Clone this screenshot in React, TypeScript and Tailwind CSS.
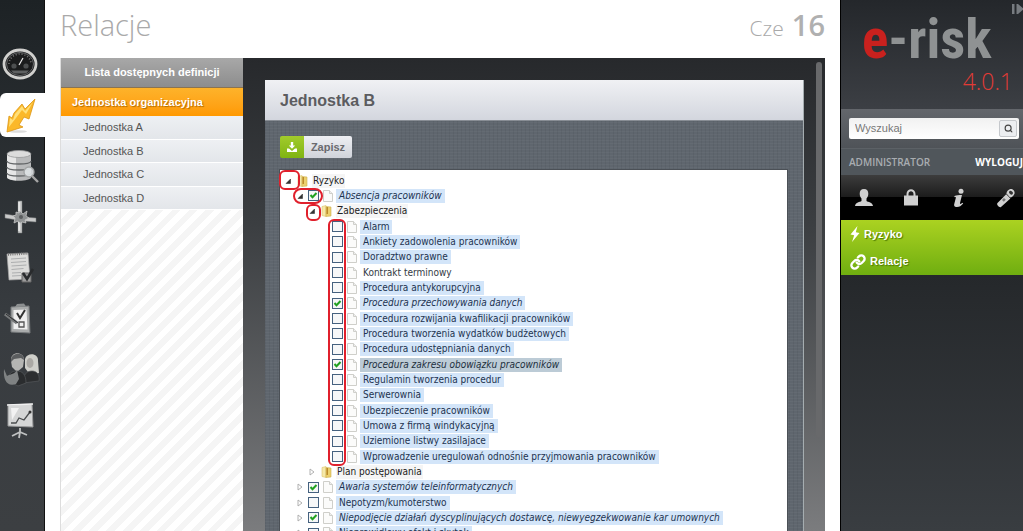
import React from "react";
import { Link, Search } from "lucide-react";

type Tone = "plain" | "marked" | "current" | "folder";

interface Row {
  label: string;
  level: 0 | 1 | 2 | 3;
  kind: "folder" | "file";
  toggle?: "open" | "closed";
  checked?: boolean;
  tone?: Tone;
}

const rows: Row[] = [
  { label: "Ryzyko", level: 0, kind: "folder", toggle: "open" },
  { label: "Absencja pracowników", level: 1, kind: "file", toggle: "open", checked: true },
  { label: "Zabezpieczenia", level: 2, kind: "folder", toggle: "open" },
  { label: "Alarm", level: 3, kind: "file" },
  { label: "Ankiety zadowolenia pracowników", level: 3, kind: "file" },
  { label: "Doradztwo prawne", level: 3, kind: "file" },
  { label: "Kontrakt terminowy", level: 3, kind: "file", tone: "plain" },
  { label: "Procedura antykorupcyjna", level: 3, kind: "file" },
  { label: "Procedura przechowywania danych", level: 3, kind: "file", checked: true },
  { label: "Procedura rozwijania kwafilikacji pracowników", level: 3, kind: "file" },
  { label: "Procedura tworzenia wydatków budżetowych", level: 3, kind: "file" },
  { label: "Procedura udostępniania danych", level: 3, kind: "file" },
  { label: "Procedura zakresu obowiązku pracowników", level: 3, kind: "file", checked: true, tone: "current" },
  { label: "Regulamin tworzenia procedur", level: 3, kind: "file" },
  { label: "Serwerownia", level: 3, kind: "file" },
  { label: "Ubezpieczenie pracowników", level: 3, kind: "file" },
  { label: "Umowa z firmą windykacyjną", level: 3, kind: "file" },
  { label: "Uziemione listwy zasilajace", level: 3, kind: "file" },
  { label: "Wprowadzenie uregulowań odnośnie przyjmowania pracowników", level: 3, kind: "file" },
  { label: "Plan postępowania", level: 2, kind: "folder", toggle: "closed" },
  { label: "Awaria systemów teleinformatycznych", level: 1, kind: "file", toggle: "closed", checked: true },
  { label: "Nepotyzm/kumoterstwo", level: 1, kind: "file", toggle: "closed" },
  { label: "Niepodjęcie działań dyscyplinujących dostawcę, niewyegzekwowanie kar umownych", level: 1, kind: "file", toggle: "closed", checked: true },
  { label: "Nieprawidłowy efekt i skutek", level: 1, kind: "file", toggle: "closed" },
];

const indent = ["pl-[2px]", "pl-[14px]", "pl-[26px]", "pl-[38px]"];

const tones: Record<Tone, string> = {
  plain: "text-[#333a44]",
  marked: "bg-[#d3e5f9] text-[#1d3350]",
  current: "bg-[#bccbd6] text-[#1d2f3d]",
  folder: "bg-[#f5f5f5] text-[#222]",
};

function Toggle({ state, label }: { state?: "open" | "closed"; label: string }) {
  if (!state) return <span className="w-3 shrink-0" />;
  return (
    <button type="button" aria-label={label} className="flex w-3 shrink-0 justify-center">
      <svg viewBox="0 0 8 8" className="size-2">
        {state === "open" ? (
          <path d="M6.500 2v4.500H2z" fill="#333" stroke="#222" strokeWidth=".5" />
        ) : (
          <path d="M2 1l4 3-4 3z" fill="#fff" stroke="#a9a9a9" strokeWidth=".9" />
        )}
      </svg>
    </button>
  );
}

function FolderIcon() {
  return (
    <svg viewBox="0 0 14 14" className="mx-0.5 size-3.5 shrink-0">
      <path d="M2 2.500l4-1v11l-4-1z" fill="#f6e9a8" stroke="#dcc46c" strokeWidth=".6" />
      <path d="M6 2.500l5 .5v9l-5 .5z" fill="#ecd06c" stroke="#cfb052" strokeWidth=".6" />
      <path d="M6.500 3h1.500v7H6.500z" fill="#b98a2c" />
    </svg>
  );
}

function FileIcon() {
  return (
    <svg viewBox="0 0 12 14" className="ml-[3px] h-3.5 w-3 shrink-0">
      <path d="M1.500 1.500h6l3 3v8h-9z" fill="#fbfbfa" stroke="#cfcfca" />
      <path d="M7.500 1.500v3h3" fill="#eee" stroke="#cfcfca" />
    </svg>
  );
}

function TreeRow({ row, index }: { row: Row; index: number }) {
  const id = "node-" + index;
  const tone = row.tone ?? (row.kind === "folder" ? "folder" : "marked");
  const text = tones[tone] + (row.checked ? " italic" : "");
  return (
    <li role="treeitem" aria-level={row.level + 1} className={"flex items-center " + indent[row.level]}>
      <Toggle state={row.toggle} label={"Rozwiń: " + row.label} />
      {row.kind === "file" ? (
        <>
          <span className="relative ml-0.5 flex size-[11px] shrink-0">
            <input
              id={id}
              type="checkbox"
              defaultChecked={row.checked}
              className="peer size-[11px] appearance-none border border-[#45617f] bg-[#f6f7f8]"
            />
            <svg viewBox="0 0 11 11" className="pointer-events-none absolute inset-0 hidden peer-checked:block">
              <path d="M2.500 5l2 2.200L8.500 3" fill="none" stroke="#21a121" strokeWidth="2" />
            </svg>
          </span>
          <FileIcon />
          <label htmlFor={id} className={"ml-0.5 px-[3px] leading-[14px] whitespace-nowrap " + text}>
            {row.label}
          </label>
        </>
      ) : (
        <>
          <FolderIcon />
          <span className={"px-px leading-[14px] whitespace-nowrap " + text}>{row.label}</span>
        </>
      )}
    </li>
  );
}

const navItems: { name: string; art: React.ReactNode }[] = [
  {
    name: "Pulpit",
    art: (
      <>
        <ellipse cx="19" cy="20" rx="16" ry="14" fill="#1b1c1d" stroke="#d0d0ce" strokeWidth="2.800" />
        <ellipse cx="19" cy="20" rx="13.500" ry="11.500" fill="none" stroke="#66686a" strokeWidth="1" />
        <path d="M8 20a11 10 0 0 1 22 0" fill="none" stroke="#777" strokeWidth="1.600" strokeDasharray="1 2" />
        <circle cx="13" cy="22" r="2.600" fill="#4d4f50" />
        <circle cx="25" cy="22" r="2.600" fill="#4d4f50" />
        <path d="M10 26.500h18l-3 3H13z" fill="#5e6061" />
        <path d="M18 21l4-7" stroke="#eee" strokeWidth="1.200" />
      </>
    ),
  },
  {
    name: "Ryzyko",
    art: (
      <>
        <ellipse cx="17" cy="36.500" rx="9" ry="1.300" fill="#ddd" />
        <path d="M34 4L24 14l-3-5-8 9-2 5-3-2-2 16 16-5-4-2 5-8 5 2z" fill="#fbb829" stroke="#dc9614" strokeWidth=".8" />
        <path d="M32 7l-8 9-3-5-7 8-2 6-3-2-1 9 7-9 6-8 4 4z" fill="#ffe07a" />
      </>
    ),
  },
  {
    name: "Rejestr",
    art: (
      <>
        <path d="M6 8v23c0 5 24 5 24 0V8z" fill="#b9babb" />
        <path d="M6 8v23c0 2 4 3 9 3.600V8z" fill="#e6e6e6" />
        <path d="M6 15c0 4 24 4 24 0M6 21c0 4 24 4 24 0M6 27c0 4 24 4 24 0" fill="none" stroke="#65686a" strokeWidth="1.300" />
        <ellipse cx="18" cy="8" rx="12" ry="3.500" fill="#dcdcdc" stroke="#98999a" strokeWidth=".8" />
        <path d="M31 30l6 6" stroke="#a5a5a5" strokeWidth="2.400" />
        <circle cx="28" cy="26" r="5" fill="#dfe3e5" fillOpacity=".9" stroke="#a2a4a5" strokeWidth="1.300" />
      </>
    ),
  },
  {
    name: "Procesy",
    art: (
      <>
        <path d="M17 4h4v12h-4zM17 24h4v12h-4zM4 17l12 2v4L4 21zM22 20l13 1v4l-13-1z" fill="#c8c9c9" stroke="#77797a" strokeWidth=".5" />
        <path d="M15 15l3 1 1-2 3 3 4-3-1 5 3 2-4 2 1 3-4-1-3 2-1-3-4 2 1-5-2-2 3-1z" fill="#8f9293" stroke="#c4c4c4" strokeWidth=".8" />
        <circle cx="20" cy="20" r="2" fill="#5a5d5f" />
        <path d="M18 5v9M18 25v9" stroke="#fff" />
      </>
    ),
  },
  {
    name: "Zadania",
    art: (
      <>
        <path d="M6 6l21-1 2 26-21 1z" fill="#dcdcda" stroke="#a5a5a5" strokeWidth=".7" />
        <path d="M7 6.500l20-1" stroke="#777" strokeWidth="2.500" strokeDasharray="1 1.200" />
        <path d="M10 11l15-1M10 14.500l15-1M10.500 18l15-1M10.500 21.500l12-1M11 25l9-.5M11 28l9-.5" stroke="#a0a2a3" strokeWidth=".8" />
        <path d="M21 25h9v9h-9z" fill="#9c9c9c" stroke="#666" />
        <path d="M22 25l4 6 6-10" fill="none" stroke="#292b2d" strokeWidth="2.600" />
      </>
    ),
  },
  {
    name: "Audyt",
    art: (
      <>
        <path d="M10 8l18-1 1 27-19-1z" fill="#a9abab" stroke="#75787a" />
        <path d="M12.500 11l13-.5 1 20-14-.5z" fill="#efefef" />
        <path d="M14 8l2-3 7-.5 2 3z" fill="#8c8f90" />
        <path d="M16 14l3 5 5-8" fill="none" stroke="#333" strokeWidth="2" />
        <path d="M18 23h5v5h-5z" fill="none" stroke="#555" strokeWidth="1.300" />
        <path d="M4 15l12 9" stroke="#77797a" strokeWidth="3.400" />
        <path d="M5 15l12 9" stroke="#2c2e30" strokeWidth="1" />
      </>
    ),
  },
  {
    name: "Użytkownicy",
    art: (
      <>
        <path d="M24 9c2-7 14-6 13 2l1 12-4 1-2-3-5 1-3-4z" fill="#cfcfca" />
        <ellipse cx="29" cy="13" rx="3.500" ry="5" fill="#aaa8a4" />
        <path d="M22 33c0-9 4-12 9-12s8 4 7 10z" fill="#2c2e30" stroke="#55585a" strokeWidth=".7" />
        <path d="M10 11c-1-10 13-10 13-1l-1 7-6 5-5-5z" fill="#b5b5b3" />
        <path d="M10 12c-1-10 13-11 13-2l-3-2-7 1z" fill="#5b5d5f" />
        <path d="M7 31c0-8 4-10 9-10s9 3 9 12l-8 3z" fill="#2a2c2e" stroke="#55585a" strokeWidth=".7" />
        <path d="M3 19l3 7c4-2 8-2 10-6l2 9-3 5c-9 3-13-4-12-15z" fill="#7f8283" />
      </>
    ),
  },
  {
    name: "Raporty",
    art: (
      <>
        <path d="M19 27v5M19 31l-8 4M19 31l7 3M19 31l-1 6" stroke="#bfc1c1" strokeWidth="1.800" />
        <path d="M7 4l24-1 1 23-25-1z" fill="#d5d6d6" stroke="#98999a" />
        <path d="M6 4l26-1" stroke="#f0f0f0" strokeWidth="1.500" />
        <path d="M10 7l8 0-7 12z" fill="#f2f2f2" />
        <path d="M10 22h5l3-5 5 2 6-8" fill="none" stroke="#4b4d4f" strokeWidth="1.300" />
        <circle cx="29" cy="11" r="1.500" fill="#333" />
      </>
    ),
  },
];

const units = ["Jednostka A", "Jednostka B", "Jednostka C", "Jednostka D"];

const tools: { name: string; art: React.ReactNode }[] = [
  {
    name: "Profil",
    art: (
      <path d="M10 1c3 0 4.300 2 4.300 4.800 0 2-.8 3.700-1.800 4.700v2.500c1.500 1.200 6 1.200 6.500 5H1c.5-3.800 5-3.800 6.500-5v-2.500c-1-1-1.800-2.700-1.800-4.700C5.700 3 7 1 10 1z" />
    ),
  },
  {
    name: "Blokada",
    art: (
      <path d="M3 7.500H5.500V6c0-6.300 9-6.300 9 0v1.500H17V17.500H3zM7.500 7.500h5V6c0-3.600-5-3.600-5 0z" fillRule="evenodd" />
    ),
  },
  {
    name: "Informacje",
    art: (
      <>
        <circle cx="12" cy="3.200" r="2.500" />
        <path d="M5.500 8c2-.8 4-1 7.500-1l-2 8c-.3 1.400 1 1 2.500-.3l.7.8C12 18 10.500 19 8 19c-2.800 0-3.200-1.500-2.700-3.300L6.800 10c.2-.9-.3-1-1.500-.8z" />
      </>
    ),
  },
  {
    name: "Narzędzia",
    art: (
      <>
        <path d="M10.200 6.200l4.200 4.200L5 19c-1.500 1-5-2.500-3.500-4z" />
        <path d="M10.500 5.500c0-2 2-4.500 4.500-4.500s4 2.500 3.500 4.500-2.500 4-4.500 4z" />
        <ellipse cx="15" cy="4.700" rx="2.200" ry="1.600" fill="#333" transform="rotate(40 15 4.700)" />
        <path d="M8 10l1.800 1.800-2 2L6 12z" fill="#777" />
      </>
    ),
  },
];

export default function App() {
  return (
    <div className="flex h-screen overflow-hidden bg-white font-['Liberation_Sans',sans-serif] text-[11px]">
      <nav
        aria-label="Moduły"
        className="flex w-[45px] shrink-0 flex-col gap-[7px] border-r border-[#111] bg-linear-to-b from-[#1d2225] via-[#383c40] via-60% to-[#3c3f42] pt-[42px]"
      >
        {navItems.map((item, i) => (
          <a
            key={item.name}
            href="#"
            aria-label={item.name}
            className={"flex h-11 items-center pl-px " + (i === 1 ? "-mr-px rounded-l-md bg-white" : "")}
          >
            <svg viewBox="0 0 40 40" className="size-10">
              {item.art}
            </svg>
          </a>
        ))}
      </nav>

      <main className="flex min-w-0 flex-1 flex-col px-[15px]">
        <header className="flex h-[58px] shrink-0 items-start justify-between pt-1 font-['Open_Sans',sans-serif] text-[#a9a9a9]">
          <h1 className="text-[29px] leading-[42px] font-light">Relacje</h1>
          <p className="flex items-baseline gap-2 leading-[42px]">
            <span className="text-[21px] font-light">Cze</span>
            <span className="text-[29px] font-semibold text-[#b0b0b0]">16</span>
          </p>
        </header>

        <div className="flex min-h-0 flex-1">
          <aside className="flex w-[183px] shrink-0 flex-col border-l border-[#ddd] bg-[repeating-linear-gradient(135deg,#fff_0_6px,#f5f5f5_6px_12px)]">
            <h2 className="h-[30px] border-b border-[#8a7350] bg-linear-to-b from-[#a8a8a8] to-[#8d8d8d] text-center text-[11px] leading-[29px] font-bold text-white">
              Lista dostępnych definicji
            </h2>
            <a
              href="#"
              className="block h-7 bg-linear-to-b from-[#fdb32a] to-[#ff9900] pl-[11px] text-[11px] leading-7 font-bold text-white [text-shadow:1px_1px_1px_#b36b00]"
            >
              Jednostka organizacyjna
            </a>
            <ul className="grid h-[94px] auto-rows-fr">
              {units.map((unit) => (
                <li key={unit} className="flex border-b border-white bg-linear-to-b from-[#eef0f3] to-[#e3e6ea]">
                  <a href="#" className="flex flex-1 items-center pl-[22px] text-[#555]">
                    {unit}
                  </a>
                </li>
              ))}
            </ul>
          </aside>

          <div className="flex min-w-0 flex-1 bg-linear-to-b from-[#27292c] via-[#3b3e41] via-35% to-[#7b7c7e]">
            <section className="mt-[22px] ml-[22px] min-w-0 flex-1 border-r border-[#a5adb0] bg-[#5f666e] bg-[repeating-linear-gradient(0deg,#ffffff08_0_1px,transparent_1px_3px),repeating-linear-gradient(90deg,#0000000d_0_1px,transparent_1px_4px)]">
              <h2 className="h-[41px] border-b border-[#888d94] bg-linear-to-b from-[#f0f1f4] to-[#d3d6de] pl-[15px] text-base leading-[42px] font-bold text-[#5c5c60]">
                Jednostka B
              </h2>
              <div className="pt-[15px] pr-4 pl-[15px]">
                <button type="button" className="flex h-[22px] overflow-hidden rounded-xs text-[11px] font-bold text-[#6a6a6e]">
                  <span className="flex w-6 items-center justify-center bg-linear-to-b from-[#a2cb2b] to-[#7fb411]">
                    <svg viewBox="0 0 12 12" className="size-3">
                      <path d="M4.800 1h2.400v3.500h2L6 7.800 2.800 4.500h2z" fill="#fff" />
                      <path d="M1 7.500h2L6 10l3-2.500h2V11H1z" fill="#fff" />
                    </svg>
                  </span>
                  <span className="flex w-12 items-center justify-center bg-linear-to-b from-[#eeeff3] to-[#d0d3da]">Zapisz</span>
                </button>
                <div className="relative mt-3 bg-white pt-[3px] font-['DejaVu_Sans_Condensed','DejaVu_Sans',sans-serif] text-[10px] outline outline-[#4b5056]">
                  <ul role="tree" className="grid h-92 auto-rows-fr">
                    {rows.map((row, i) => (
                      <TreeRow key={row.label} row={row} index={i} />
                    ))}
                  </ul>
                  <span className="pointer-events-none absolute top-0 -left-px h-[20px] w-[21px] rounded-md border-2 border-[#e0202c]" />
                  <span className="pointer-events-none absolute top-[18px] left-[13px] h-[16px] w-[30px] rounded-lg border-2 border-[#e0202c]" />
                  <span className="pointer-events-none absolute top-[34px] left-[26px] h-[17px] w-[15px] rounded-md border-2 border-[#e0202c]" />
                  <span className="pointer-events-none absolute top-[49px] left-[48px] h-[247px] w-[18px] rounded-md border-2 border-[#e0202c]" />
                </div>
              </div>
            </section>
            <div className="flex w-[21px] shrink-0 justify-center pt-1">
              <div className="ml-2 h-[376px] w-1.5 rounded-full bg-[#68696b]" />
            </div>
          </div>
        </div>
      </main>

      <aside className="flex w-[183px] shrink-0 flex-col overflow-hidden border-l border-black bg-[#2d3135]">
        <div className="relative h-[109px] shrink-0 bg-linear-to-b from-[#24272b] to-[#3c3f44] pt-[11px] pr-2.5 pl-[21px]">
          <button type="button" aria-label="Zwiń panel" className="absolute top-1 -right-0.5">
            <svg viewBox="0 0 14 10" className="h-2.5 w-3.5">
              <path d="M1 0h2.500v10H1zM5.500 0H7v10H5.500zM7 0l6 5-6 5z" fill="#777b80" />
            </svg>
          </button>
          <p className="font-['Liberation_Sans_Narrow','Roboto_Condensed',sans-serif] text-[55px] leading-[56px] font-bold whitespace-nowrap text-[#8f9293]">
            <span className="text-[#c9211e]">e</span>-risk
          </p>
          <p className="mt-0.5 text-right font-['Open_Sans',sans-serif] text-[23px] leading-6 font-light text-[#e23b36]">4.0.1</p>
        </div>

        <form className="flex h-[39px] shrink-0 items-center bg-linear-to-b from-[#63666b] to-[#4f5358] pr-1 pl-2">
          <div className="flex h-[21px] flex-1 items-center rounded-xs bg-linear-to-b from-[#f1f1f1] to-white pr-0.5">
            <input
              type="text"
              aria-label="Wyszukaj"
              placeholder="Wyszukaj"
              className="min-w-0 flex-1 bg-transparent pl-1.5 text-[11px] text-[#555] outline-none placeholder:text-[#777]"
            />
            <button
              type="button"
              aria-label="Szukaj"
              className="flex h-[17px] w-[18px] items-center justify-center rounded-xs border border-[#c5c8cc] bg-[#eceef1] text-[#444]"
            >
              <Search size={9} strokeWidth={3} />
            </button>
          </div>
        </form>

        <div className="flex h-[27px] shrink-0 items-center justify-between border-t border-[#5c6166] bg-[#50565b] pl-2 font-['Open_Sans',sans-serif] text-[10px] font-semibold">
          <span className="text-[#a9adb1]">ADMINISTRATOR</span>
          <a href="#" className="font-bold text-white">
            WYLOGUJ
          </a>
        </div>

        <div className="flex h-[45px] shrink-0 items-center justify-between bg-linear-to-b from-[#3d3d3d] via-[#1c1c1c] via-49% to-black to-50% pr-[7px] pl-[13px]">
          {tools.map((tool) => (
            <button key={tool.name} type="button" aria-label={tool.name}>
              <svg viewBox="0 0 20 20" className="size-5" fill="#d0d0d0">
                {tool.art}
              </svg>
            </button>
          ))}
        </div>

        <nav
          aria-label="Ścieżka"
          className="flex h-[55px] shrink-0 flex-col bg-linear-to-b from-[#abd221] to-[#6fae10] text-[11px] font-bold text-white [text-shadow:1px_1px_1px_#4d7a00]"
        >
          <a href="#" className="flex h-7 items-center gap-1 pl-[9px]">
            <svg viewBox="0 0 10 16" className="h-4 w-2.5">
              <path d="M7.500 0L.5 8.500l3.700.8L2 16l7.500-9-3.700-.8z" fill="#fff" />
            </svg>
            Ryzyko
          </a>
          <a href="#" className="flex h-[27px] items-center gap-1 pl-[9px]">
            <Link size={16} strokeWidth={3.5} />
            Relacje
          </a>
        </nav>
        <div className="flex-1 bg-linear-to-b from-[#25282b] to-[#393d41]" />
      </aside>
    </div>
  );
}
